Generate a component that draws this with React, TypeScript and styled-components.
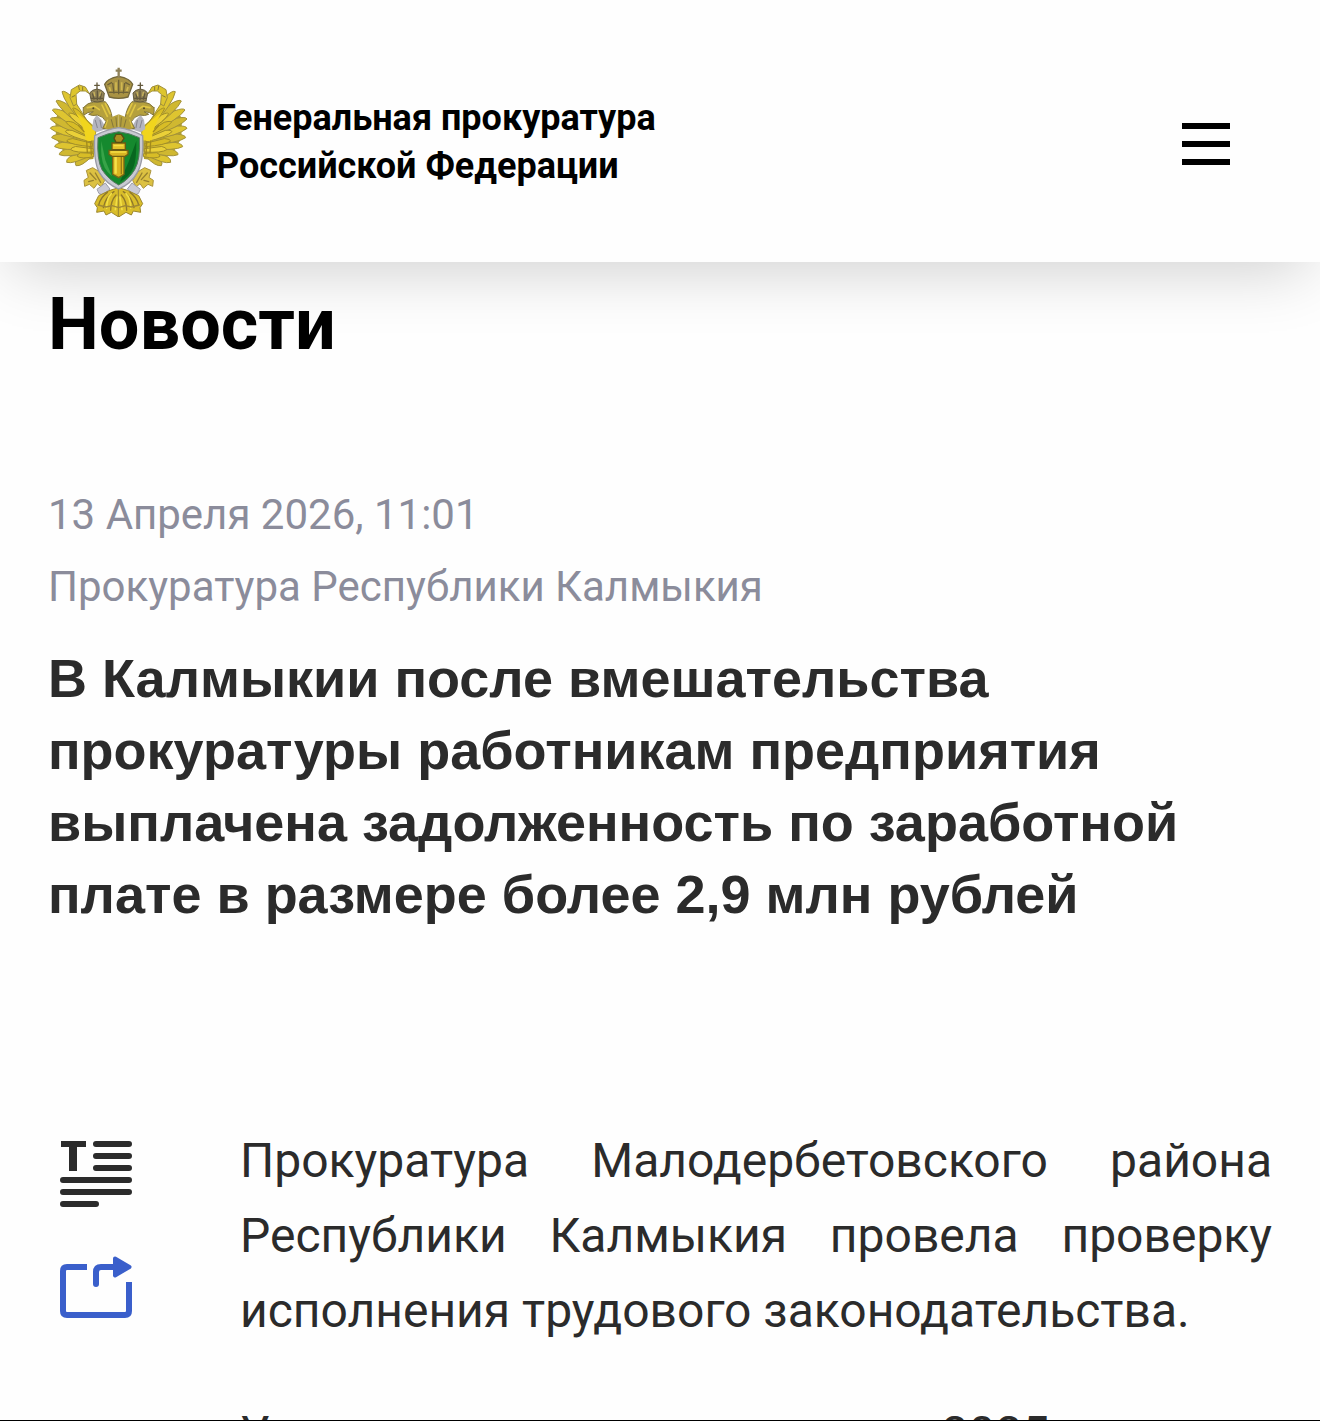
import React from 'react';
import styled, { createGlobalStyle } from 'styled-components';

const Global = createGlobalStyle`
  * { box-sizing: border-box; }
  body { margin: 0; background: #fefefe; font-family: Roboto, "Noto Sans", sans-serif; }
  h1, h2, p { margin: 0; }
`;

const Page = styled.div`
  display: flex;
  flex-direction: column;
  height: 100vh;
  overflow: hidden;
  border-bottom: 1px solid #000;
`;

const Header = styled.header`
  display: flex;
  flex: none;
  align-items: center;
  justify-content: space-between;
  padding: 66px 90px 45px 48px;
  background: #fefefe;
  box-shadow: 0 20px 60px -12px rgba(0, 0, 0, 0.19);
`;

const Brand = styled.a`
  display: flex;
  align-items: center;
  gap: 28px;
  color: #000;
  font-size: 36px;
  font-weight: 700;
  line-height: 48px;
  text-decoration: none;
`;

const EmblemSvg = styled.svg`
  display: block;
  width: 140px;
  height: 151px;
`;

const MenuButton = styled.button`
  display: flex;
  flex-direction: column;
  gap: 12px;
  padding: 4px 0 0;
  border: 0;
  background: none;
  cursor: pointer;
`;

const MenuBar = styled.span`
  width: 48px;
  height: 6px;
  background: #000;
`;

const Main = styled.main`
  flex: none;
  padding: 21px 48px 0;
`;

const SectionTitle = styled.h1`
  color: #000;
  font-size: 72px;
  line-height: 84px;
`;

const Meta = styled.div`
  margin-top: 112px;
  color: #8b8c9b;
  font-size: 42px;
  line-height: 72px;
`;

const Headline = styled.h2`
  margin-top: 19px;
  color: #2b2b2b;
  font-family: "Liberation Sans", Arial, sans-serif;
  font-size: 54px;
  line-height: 72px;
`;

const Article = styled.article`
  display: flex;
  gap: 108px;
  margin-top: 193px;
`;

const Tools = styled.div`
  display: flex;
  flex: none;
  flex-direction: column;
  gap: 48px;
  padding: 17px 0 0 12px;
`;

const ToolButton = styled.button`
  display: block;
  padding: 0;
  border: 0;
  background: none;
  cursor: pointer;
`;

const ToolIcon = styled.svg`
  display: block;
  width: 72px;
  height: 67px;
`;

const Body = styled.div`
  flex: 1;
  color: #2b2b2b;
  font-size: 48px;
  line-height: 75px;
  text-align: justify;
`;

const Paragraph = styled.p`
  & + & { margin-top: 48px; }
`;

type Feather = [number, number, number, number, number];

const outerFeathers: Feather[] = [
  [150, 300, 108, 332, 13],
  [150, 295, 80, 322, 13],
  [148, 285, 58, 299, 13],
  [148, 275, 44, 275, 13],
  [146, 262, 35, 248, 14],
  [146, 250, 31, 220, 14],
  [146, 240, 31, 192, 14],
  [146, 230, 37, 165, 14],
  [146, 222, 48, 138, 14],
  [146, 218, 66, 110, 15],
];

const innerFeathers: Feather[] = [
  [160, 300, 112, 304, 10],
  [158, 286, 92, 284, 10],
  [156, 270, 80, 258, 10],
  [154, 256, 76, 230, 10],
  [154, 242, 78, 202, 10],
  [156, 230, 86, 176, 10],
  [158, 224, 98, 160, 9],
];

const featherPath = ([x1, y1, x2, y2, w]: Feather) => {
  const length = Math.hypot(x2 - x1, y2 - y1);
  const nx = (-(y2 - y1) / length) * w;
  const ny = ((x2 - x1) / length) * w;
  const mx = x1 + (x2 - x1) * 0.78;
  const my = y1 + (y2 - y1) * 0.78;
  return `M${x1 + nx * 0.5} ${y1 + ny * 0.5}L${mx + nx} ${my + ny}Q${x2 + nx * 0.6} ${y2 + ny * 0.6} ${x2} ${y2}Q${mx - nx} ${my - ny} ${x1 - nx * 0.5} ${y1 - ny * 0.5}Z`;
};

function EagleHalf() {
  return (
    <g strokeLinejoin="round" strokeLinecap="round">
      <path d="M76 150L46 190L48 250L72 292L112 318L160 312L170 220L128 184Z" fill="#b3a02c" />
      {outerFeathers.map((f, i) => (
        <path key={i} d={featherPath(f)} fill={i % 2 ? '#dec530' : '#d0b830'} stroke="#a3923b" strokeWidth="3" />
      ))}
      {innerFeathers.map((f, i) => (
        <path key={i} d={featherPath(f)} fill={i % 2 ? '#ead038' : '#d8bd26'} stroke="#a08d28" strokeWidth="3" />
      ))}
      <path d="M108 174Q134 190 164 222L168 256L138 258Q134 218 108 174Z" fill="#f1d51d" />
      <path d="M140 258L142 292M152 260L154 300M132 230L116 212" stroke="#a28a1c" strokeWidth="4" fill="none" />
      <path d="M100 152L90 128L94 104L118 90L136 96L148 116L136 108L120 108L108 118L110 146Z" fill="#ddc52e" stroke="#a08f3b" strokeWidth="3" />
      <path d="M96 126L104 122M116 94L118 104M128 96L128 106" stroke="#887933" strokeWidth="3" />
      <path d="M160 194L156 222L170 232L200 222L184 194L170 180Z" fill="#b4b5bf" />
      <path d="M166 196L172 218M180 196L184 218" stroke="#85858e" strokeWidth="3" />
      <path d="M130 158Q144 142 160 142L196 140Q212 158 217 190L214 224L188 220L198 200Q190 184 172 180Q158 184 146 178L160 170Q142 170 132 180Q128 170 130 158Z" fill="#b5a03d" stroke="#83763a" strokeWidth="3" />
      <path d="M142 158L164 154L178 164M186 150L202 184M196 146L210 176M204 196L196 216" stroke="#e0c643" strokeWidth="5" fill="none" />
      <path d="M206 190L236 178V222H196Z" fill="#b5a03d" />
      <path d="M214 194L220 216M228 188L230 214" stroke="#83763a" strokeWidth="3" />
      <circle cx="160" cy="160" r="3" fill="#514823" />
      <path d="M154 138L149 114Q156 104 171 102Q186 104 193 114L190 138Q172 144 154 138Z" fill="#918254" stroke="#645b3c" strokeWidth="3" />
      <path d="M171 102V84M164 91H178M158 117L162 132M172 108V134M184 117L180 132M154 130H188" stroke="#63593c" strokeWidth="4" fill="none" />
      <path d="M162 112L164 122M181 112L179 122" stroke="#c9b55d" strokeWidth="4" />
      <path d="M140 346L158 338L178 350L194 376L184 396L172 386L162 400L148 388L134 394L132 376L144 368Z" fill="#dcc142" stroke="#aa9338" strokeWidth="3" />
      <path d="M150 354L168 374M146 380L160 376M166 354L182 382" stroke="#97812e" strokeWidth="4" />
      <path d="M172 402L196 384L210 402L188 420L178 416Z" fill="#cacad5" stroke="#9d9daa" strokeWidth="3" />
      <path d="M236 398L210 406L176 422L164 446L172 458L170 472L192 468L198 480L214 472L236 486Z" fill="#d9bd2a" stroke="#9b862c" strokeWidth="3" />
      <path d="M222 410Q198 424 190 458M228 420Q212 438 212 466M202 412Q182 426 176 450" stroke="#8e782a" strokeWidth="4" fill="none" />
      <path d="M214 416Q200 430 200 460M232 426L226 464" stroke="#f2df45" strokeWidth="5" fill="none" />
      <path d="M174 450L198 456L216 452L236 458" stroke="#a08935" strokeWidth="4" fill="none" />
    </g>
  );
}

function Emblem() {
  return (
    <EmblemSvg viewBox="24 33 420 453" aria-hidden="true">
      <EagleHalf />
      <g transform="translate(472 0) scale(-1 1)"><EagleHalf /></g>
      <path d="M208 126L194 88Q202 70 236 64Q270 70 278 88L264 126Q236 134 208 126Z" fill="#a99344" stroke="#73673b" strokeWidth="4" />
      <path d="M236 68V38M227 47H245" stroke="#8f825a" strokeWidth="7" fill="none" />
      <path d="M218 84L222 116M236 74V118M254 84L250 116M206 112H266M202 90L216 82M270 90L256 82" stroke="#6e6238" strokeWidth="4" fill="none" />
      <path d="M208 96L212 108M228 82V106M245 82V106M264 96L260 108" stroke="#d1b951" strokeWidth="5" />
      <path d="M236 218Q202 222 164 242Q160 318 178 352Q198 386 236 402Q274 386 292 352Q312 318 308 242Q270 222 236 218Z" fill="#c9cad2" stroke="#9a9ba6" strokeWidth="4" />
      <path d="M236 230Q204 234 174 248Q170 314 186 344Q206 374 236 390Q266 374 284 344Q302 314 298 248Q268 234 236 230Z" fill="#15892e" stroke="#577761" strokeWidth="3" />
      <path d="M184 258Q180 310 194 338Q202 352 216 364L196 316Z" fill="#38a348" />
      <path d="M240 380Q268 366 280 338Q290 312 289 258L266 320Z" fill="#08671f" />
      <path d="M218 302H252V358L236 368L218 358Z" fill="#dbb621" stroke="#776516" strokeWidth="4" />
      <path d="M227 306V356" stroke="#f5e14a" strokeWidth="7" />
      <path d="M244 306V358" stroke="#967b16" strokeWidth="4" />
      <path d="M207 286H264V298L255 304H216L207 298Z" fill="#d9b523" stroke="#705f14" strokeWidth="4" />
      <path d="M216 264H256V284H216Z" fill="#e2c22b" stroke="#6b5b12" strokeWidth="4" />
      <path d="M222 250L228 238H244L252 250L244 262H228Z" fill="#a98e1f" stroke="#554d14" strokeWidth="4" />
      <path d="M212 291H258M221 272H250" stroke="#f5de44" strokeWidth="4" />
    </EmblemSvg>
  );
}

export default function App() {
  return (
    <Page>
      <Global />
      <Header>
        <Brand href="#">
          <Emblem />
          <span>Генеральная прокуратура<br />Российской Федерации</span>
        </Brand>
        <MenuButton aria-label="Меню"><MenuBar /><MenuBar /><MenuBar /></MenuButton>
      </Header>
      <Main>
        <SectionTitle>Новости</SectionTitle>
        <Meta>
          <p>13 Апреля 2026, 11:01</p>
          <p>Прокуратура Республики Калмыкия</p>
        </Meta>
        <Headline>
          В Калмыкии после вмешательства прокуратуры работникам предприятия выплачена задолженность по заработной плате в размере более 2,9 млн рублей
        </Headline>
        <Article>
          <Tools>
            <ToolButton aria-label="Размер текста">
              <ToolIcon viewBox="0 0 72 67" fill="none" stroke="#2b2b2b" strokeWidth="6">
                <path d="M1 4H26" />
                <path d="M13 4V31" strokeWidth="8" />
                <path strokeLinecap="round" d="M36 4H69M36 16H69M36 28H69M3 40H69M3 52H69M3 64H36" />
              </ToolIcon>
            </ToolButton>
            <ToolButton aria-label="Поделиться">
              <ToolIcon viewBox="0 0 72 67" fill="none" stroke="#3a5fcb" strokeWidth="6">
                <path d="M27 12H7Q3 12 3 16V56Q3 60 7 60H65Q69 60 69 56V27" />
                <path strokeLinecap="round" d="M36 29V17Q36 12 41 12H55" />
                <path d="M55 3.500L69.500 12L55 20.500Z" fill="#3a5fcb" strokeWidth="4" strokeLinejoin="round" />
              </ToolIcon>
            </ToolButton>
          </Tools>
          <Body>
            <Paragraph>Прокуратура Малодербетовского района Республики Калмыкия провела проверку исполнения трудового законодательства.</Paragraph>
            <Paragraph>Установлено, что в начале 2025 года на предприятии</Paragraph>
          </Body>
        </Article>
      </Main>
    </Page>
  );
}
